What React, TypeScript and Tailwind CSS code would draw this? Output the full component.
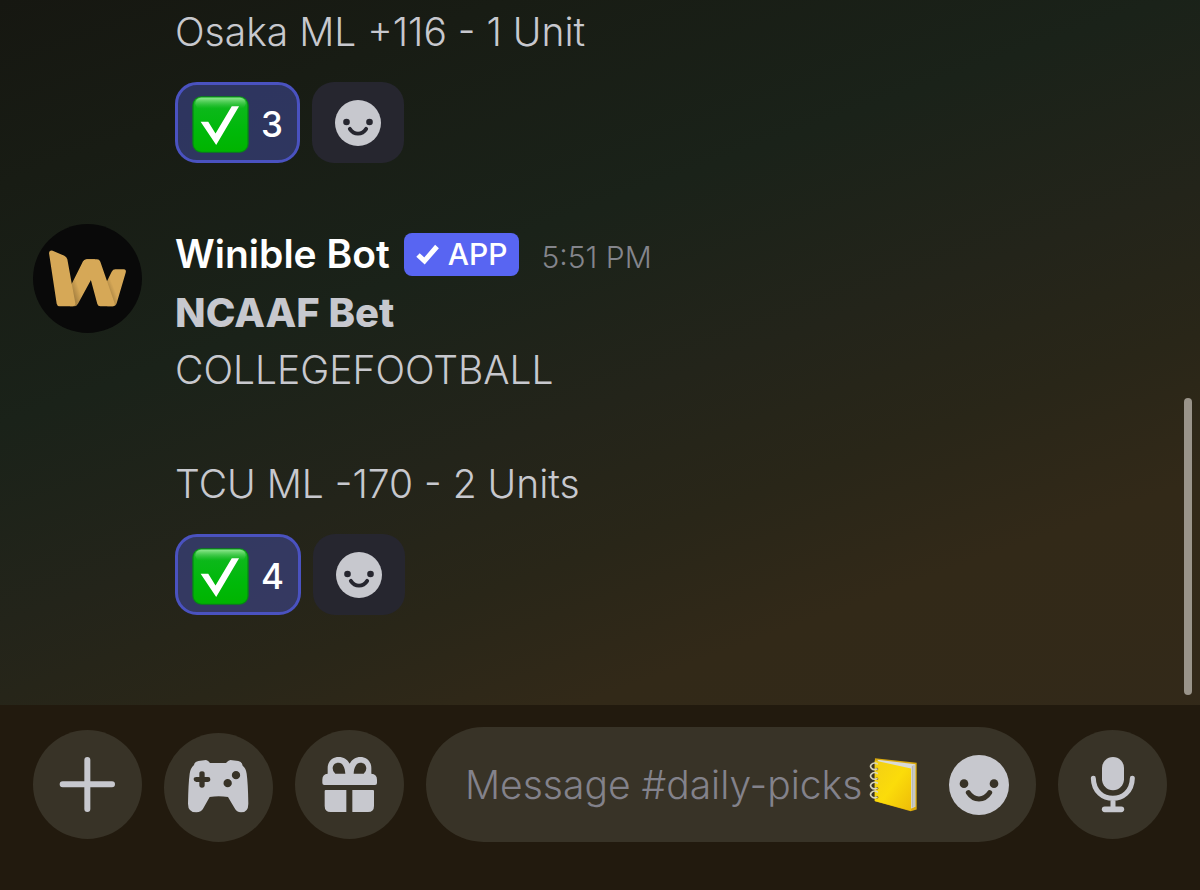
import type { ReactNode } from "react";

function Smile({ className, face }: { className: string; face: string }) {
  return (
    <svg viewBox="0 0 180 180" className={className} aria-hidden="true">
      <circle cx="90" cy="90" r="90" fill="#c7c8ce" />
      <g className={face}>
        <circle cx="45" cy="86" r="13" fill="currentColor" />
        <circle cx="135" cy="86" r="13" fill="currentColor" />
        <path d="M58 113C74 138 106 138 122 113" fill="none" stroke="currentColor" strokeWidth="15" strokeLinecap="round" />
      </g>
    </svg>
  );
}

function CheckEmoji() {
  return (
    <svg viewBox="0 0 172 172" className="size-[57px]" aria-hidden="true">
      <defs>
        <linearGradient id="check-face" x1="0" y1="0" x2="0" y2="1">
          <stop offset="0" stopColor="#2fb53a" />
          <stop offset="0.2" stopColor="#0cb81a" />
          <stop offset="0.6" stopColor="#00b90a" />
          <stop offset="1" stopColor="#00b400" />
        </linearGradient>
        <linearGradient id="check-gloss" x1="0" y1="0" x2="0" y2="1">
          <stop offset="0" stopColor="#8fe88f" />
          <stop offset="1" stopColor="#2fc83a" stopOpacity="0" />
        </linearGradient>
      </defs>
      <rect x="1" y="1" width="170" height="170" rx="27" fill="#058a12" />
      <rect x="5" y="3" width="162" height="165" rx="24" fill="url(#check-face)" />
      <rect x="10" y="5" width="152" height="34" rx="17" fill="url(#check-gloss)" />
      <path d="M26 78H49L71 113L120 31H142L73 148Z" fill="#fff" />
    </svg>
  );
}

function WinibleLogo() {
  return (
    <svg viewBox="39 26 327 327" className="size-[109px] shrink-0 rounded-full bg-[#090909]" role="img" aria-label="Winible Bot">
      <defs>
        <linearGradient id="fold-a" x1="160" y1="235" x2="180" y2="228" gradientUnits="userSpaceOnUse">
          <stop offset="0" stopColor="#a98342" />
          <stop offset="1" stopColor="#d6a857" />
        </linearGradient>
        <linearGradient id="fold-b" x1="268" y1="235" x2="286" y2="228" gradientUnits="userSpaceOnUse">
          <stop offset="0" stopColor="#a98342" />
          <stop offset="1" stopColor="#d6a857" />
        </linearGradient>
      </defs>
      <path d="M150 216L188 140Q192 132 201 132H225L214 192L174 265Q170 273 162 273H150Z" fill="url(#fold-a)" />
      <path d="M255 210L275 169Q279 162 286 162H311Q320 163 317 172L290 264Q287 273 279 273H262Z" fill="url(#fold-b)" />
      <path d="M188 140Q192 132 201 132H231Q238 132 241 139L284 264Q286 273 278 273H241Q234 273 232 266L212 192Z" fill="#d6a857" />
      <path d="M87 113Q88 104 98 106L133 121Q140 124 142 132L166 264Q166 273 158 273H119Q112 273 110 265Z" fill="#d6a857" />
    </svg>
  );
}

function Notebook() {
  const rings = [167, 196, 225, 252];
  return (
    <svg viewBox="355 140 148 165" className="ml-[7px] h-[55px] w-[49px] shrink-0" role="img" aria-label="ledger">
      <defs>
        <linearGradient id="cover" x1="0" y1="0" x2="1" y2="1">
          <stop offset="0" stopColor="#f2cf16" />
          <stop offset="0.5" stopColor="#fbdc0a" />
          <stop offset="1" stopColor="#eebc08" />
        </linearGradient>
      </defs>
      <path d="M373 143L499 157V298L481 303L373 273Z" fill="#d9a90c" />
      <path d="M380 148L495 161V290L481 296Z" fill="#d9dbd8" />
      <path d="M486 166V292M491 164V290" stroke="#9fa19c" strokeWidth="2" />
      <path d="M372 150L482 174V302L372 272Z" fill="url(#cover)" />
      {rings.map((y) => (
        <g key={y}>
          <circle cx="379" cy={y + 9} r="4" fill="#6a5410" />
          <path d={`M379 ${y + 9}C364 ${y + 15} 356 ${y + 2} 362 ${y - 5}C368 ${y - 11} 376 ${y - 10} 380 ${y - 7}`} fill="none" stroke="#d8d4b8" strokeWidth="5" strokeLinecap="round" />
        </g>
      ))}
    </svg>
  );
}

function Reactions({ count }: { count: number }) {
  return (
    <div className="mt-[22px] flex gap-3">
      <button type="button" className="flex h-[81px] items-center gap-3 rounded-[22px] border-3 border-[#4a52c0] bg-[#414b9c]/55 px-[14px] pt-1 text-[35px] font-medium text-white">
        <CheckEmoji />
        <span>{count}</span>
      </button>
      <button type="button" aria-label="Add reaction" className="flex h-[81px] w-[92px] items-center justify-center rounded-[22px] bg-[#26262f]">
        <Smile className="size-[46px]" face="text-[#26262f]" />
      </button>
    </div>
  );
}

function RoundButton({ label, viewBox, className = "", children }: { label: string; viewBox: string; className?: string; children: ReactNode }) {
  return (
    <button type="button" aria-label={label} className={`size-[109px] shrink-0 rounded-full bg-[#383327] text-[#c7c8ce] ${className}`}>
      <svg viewBox={viewBox} className="size-full" aria-hidden="true">
        {children}
      </svg>
    </button>
  );
}

export default function App() {
  return (
    <div className="flex min-h-screen flex-col bg-[linear-gradient(160deg,#161711_0%,#181c14_14%,#1a2219_32%,#23241a_47%,#292618_58%,#322918_69%,#33291a_100%)] font-['Inter','Noto_Sans',sans-serif] text-[39px] leading-[57px] text-[#c7c8ce]">
      <main className="relative flex-1 px-[33px] pt-[3px] pb-[90px]">
        <article className="pl-[142px]">
          <p className="font-light">Osaka ML +116 - 1 Unit</p>
          <Reactions count={3} />
        </article>
        <article className="mt-[61px] flex gap-[33px]">
          <WinibleLogo />
          <div>
            <header className="flex h-[60px] items-baseline leading-[60px]">
              <h2 className="font-semibold text-white">Winible Bot</h2>
              <span className="ml-[14px] flex h-[43px] items-center gap-2 self-center rounded-lg bg-[#5865f2] px-3 text-[30px] font-medium text-white">
                <svg viewBox="0 0 24 22" className="h-[22px] w-6" aria-hidden="true">
                  <path d="M2 12L8.500 18L21 3.500" fill="none" stroke="currentColor" strokeWidth="5" />
                </svg>
                APP
              </span>
              <time className="ml-[22px] text-[30px] font-light text-[#84858c]">5:51 PM</time>
            </header>
            <h3 className="text-[40px] font-extrabold">NCAAF Bet</h3>
            <p className="font-light">COLLEGEFOOTBALL</p>
            <p className="mt-[57px] font-light">TCU ML -170 - 2 Units</p>
            <Reactions count={4} />
          </div>
        </article>
        <div className="absolute right-2 bottom-2.5 h-[297px] w-2 rounded-full bg-[#9a948a]" />
      </main>
      <footer className="flex items-center gap-[22px] bg-[#221a0e] px-[33px] pt-[22px] pb-12">
        <RoundButton label="Add attachment" viewBox="39 120 327 327">
          <path d="M202 210V357M128 283H276" fill="none" stroke="currentColor" strokeWidth="18" strokeLinecap="round" />
        </RoundButton>
        <RoundButton label="Activities" viewBox="432 128 327 327" className="self-end">
          <path
            fill="currentColor"
            fillRule="evenodd"
            d="M522 224Q524 213 535 212L558 209Q565 210 570 218H618Q624 210 631 209L655 212Q666 214 668 226Q678 234 680 250Q684 278 685 340Q685 366 663 366Q650 366 644 354L624 320Q596 316 569 320L550 354Q544 366 529 366Q504 366 504 340Q505 278 509 250Q511 234 522 224ZM546 243Q538 243 538 250V260H529Q521 260 521 267T529 275H538V285Q538 292 546 292T554 285V275H563Q571 275 571 267T563 260H554V250Q554 243 546 243ZM648 242A12.500 12.500 0 1 0 648 267A12.500 12.500 0 1 0 648 242ZM623 266A12.500 12.500 0 1 0 623 291A12.500 12.500 0 1 0 623 266Z"
          />
        </RoundButton>
        <RoundButton label="Send a gift" viewBox="824 120 327 327">
          <path
            fill="currentColor"
            fillRule="evenodd"
            d="M906 285V269Q906 252 922 251V234C922 214 937 201 955 201C970 201 981 208 988 221C995 208 1006 201 1020 201C1038 201 1053 214 1053 234V251Q1070 252 1070 269V279Q1070 285 1064 285H912Q906 285 906 279ZM945 251H975C974 232 967 218 955 218C942 218 937 227 937 235Q937 246 945 251ZM1030 251H1000C1001 232 1008 218 1020 218C1033 218 1038 227 1038 235Q1038 246 1030 251Z"
          />
          <path fill="currentColor" d="M916 300H978V366H931Q913 366 913 348V303Q913 300 916 300ZM996 300H1058Q1061 300 1061 303V348Q1061 366 1043 366H996Z" />
        </RoundButton>
        <div className="flex h-[115px] min-w-0 flex-1 items-center rounded-full bg-[#383327] pr-[27px] pl-[39px]">
          <input
            type="text"
            aria-label="Message #daily-picks"
            placeholder="Message #daily-picks"
            className="field-sizing-content h-[57px] min-w-0 bg-transparent font-light outline-none placeholder:text-[#83828b] placeholder:opacity-100"
          />
          <Notebook />
          <button type="button" aria-label="Emoji" className="ml-auto shrink-0">
            <Smile className="size-[60px]" face="text-[#383327]" />
          </button>
        </div>
        <RoundButton label="Record voice message" viewBox="924 60 327 327">
          <rect x="1056" y="141" width="66" height="100" rx="33" fill="currentColor" />
          <path d="M1030 205C1032 285 1145 285 1147 205M1089 265V298" fill="none" stroke="currentColor" strokeWidth="15" strokeLinecap="round" />
          <path d="M1064 298H1114" stroke="currentColor" strokeWidth="17" strokeLinecap="round" />
        </RoundButton>
      </footer>
    </div>
  );
}
